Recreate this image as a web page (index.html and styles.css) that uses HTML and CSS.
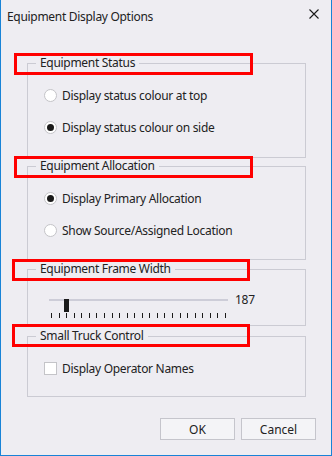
FILE: index.html
```html
<!DOCTYPE html>
<html lang="en">
<head>
<meta charset="UTF-8" />
<title>Equipment Display Options</title>
<link rel="stylesheet" href="styles.css">
</head>
<body>

<div class="window">

  <div class="titlebar">
    <span class="title">Equipment Display Options</span>
    <span class="close">
      <svg width="10" height="10" viewBox="0 0 10 10"><path d="M0.5 0.5 L9.5 9.5 M9.5 0.5 L0.5 9.5" stroke="#1a1a1a" stroke-width="1.1" fill="none"/></svg>
    </span>
  </div>

  <!-- Equipment Status -->
  <div class="group group-status">
    <div class="legend">Equipment Status</div>
    <div class="option"><span class="radio"></span>Display status colour at top</div>
    <div class="option"><span class="radio checked"></span>Display status colour on side</div>
    <div class="mark"></div>
  </div>

  <!-- Equipment Allocation -->
  <div class="group group-alloc">
    <div class="legend">Equipment Allocation</div>
    <div class="option"><span class="radio checked"></span>Display Primary Allocation</div>
    <div class="option"><span class="radio"></span>Show Source/Assigned Location</div>
    <div class="mark"></div>
  </div>

  <!-- Equipment Frame Width -->
  <div class="group group-width">
    <div class="legend">Equipment Frame Width</div>
    <div class="slider-row">
      <div class="slider">
        <div class="slider-track">
          <div class="track-line"></div>
          <div class="thumb"></div>
        </div>
        <div class="ticks">
          <i></i><i></i><i></i><i></i><i></i><i></i><i></i><i></i>
          <i></i><i></i><i></i><i></i><i></i><i></i><i></i><i></i>
          <i></i><i></i><i></i><i></i><i></i><i></i><i></i><i></i>
        </div>
      </div>
      <span class="slider-value">187</span>
    </div>
    <div class="mark mark-low"></div>
  </div>

  <!-- Small Truck Control -->
  <div class="group group-truck">
    <div class="legend">Small Truck Control</div>
    <div class="option"><span class="checkbox"></span>Display Operator Names</div>
    <div class="mark mark-low mark-tall"></div>
  </div>

  <div class="buttons">
    <button class="btn">OK</button>
    <button class="btn">Cancel</button>
  </div>

</div>

</body>
</html>
```

FILE: styles.css
```css
body {
  margin: 0;
  font-family: "Segoe UI", "Noto Sans", sans-serif;
  font-size: 12px;
  letter-spacing: -0.3px;
  color: #222;
}
.window {
  width: 332px;
  height: 456px;
  box-sizing: border-box;
  background: #eeedf2;
  border: 1px solid #1883d7;
  border-top: none;
  overflow: hidden;
}
.titlebar {
  display: flex;
  align-items: center;
  height: 34px;
}
.title {
  flex: 1;
  padding-left: 6px;
  line-height: 16px;
}
.close {
  align-self: flex-start;
  margin: 9px 12px 0 0;
  width: 10px;
  height: 10px;
}
.close svg {
  display: block;
}

.group {
  position: relative;
  display: flex;
  flex-direction: column;
  box-sizing: border-box;
  margin: 29px 0 0 26px;
  width: 279px;
  border: 1px solid #cbcbd3;
}
.group-status { height: 95px; }
.group-alloc { height: 94px; margin-top: 8px; }
.group-width { height: 57px; margin-top: 9px; }
.group-truck { height: 61px; margin-top: 10px; }

.legend {
  align-self: flex-start;
  margin: -9px 0 0 8px;
  padding: 0 4px;
  height: 16px;
  line-height: 16px;
  background: #eeedf2;
}

.option {
  display: flex;
  align-items: center;
  height: 32px;
  padding-left: 16px;
}
.legend + .option {
  margin-top: 8px;
}
.radio {
  position: relative;
  width: 13px;
  height: 13px;
  box-sizing: border-box;
  border: 1px solid #c4c4c8;
  border-radius: 50%;
  background: #fff;
  margin-right: 5px;
}
.radio.checked::after {
  content: "";
  position: absolute;
  left: 2px;
  top: 2px;
  width: 7px;
  height: 7px;
  border-radius: 50%;
  background: #1a1a1a;
}
.checkbox {
  width: 13px;
  height: 13px;
  box-sizing: border-box;
  border: 1px solid #c4c4c8;
  background: #fff;
  margin-right: 5px;
}

.slider-row {
  display: flex;
  align-items: flex-start;
  margin: 16px 0 0 21px;
}
.slider {
  width: 179px;
}
.slider-track {
  position: relative;
  height: 13px;
}
.track-line {
  margin-top: 6px;
  height: 2px;
  background: #cdcdd8;
}
.thumb {
  position: absolute;
  left: 15px;
  top: 0;
  width: 5px;
  height: 13px;
  background: #1a1a1a;
}
.ticks {
  display: flex;
  justify-content: space-between;
  padding: 0 2px;
  margin-top: 1px;
  height: 5px;
}
.ticks i {
  width: 1px;
  background: #1a1a1a;
}
.slider-value {
  margin-left: 7px;
  line-height: 13px;
}

.mark {
  position: absolute;
  left: -14px;
  top: -11px;
  width: 239px;
  height: 22px;
  box-sizing: border-box;
  border: 3px solid #ff0000;
}
.mark-low {
  left: -16px;
  width: 238px;
}
.mark-tall {
  top: -13px;
  height: 23px;
}

.buttons {
  display: flex;
  justify-content: flex-end;
  gap: 6px;
  margin: 21px 15px 0 0;
}
.btn {
  width: 75px;
  height: 22px;
  padding: 0;
  font: inherit;
  color: #222;
  background: #f4f4f7;
  border: 1px solid #c5c5cc;
}
```
